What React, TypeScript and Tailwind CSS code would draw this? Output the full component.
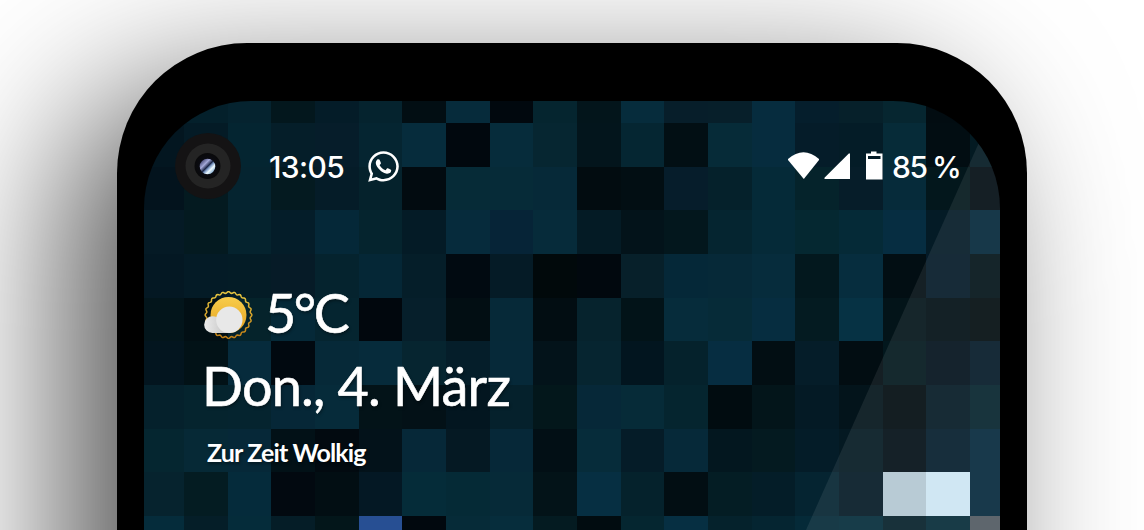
import { FaWhatsapp } from "react-icons/fa";

// wallpaper tiles, one row of hex values per line of the mosaic
const wallpaper = [
  "041a24 04202b 05232f 03171d 041c28 05232e 020e13 062b3b 01080e 05252f 03151b 062c3c 071e2a 071f2a 062c3e 051e2c 06202a 062630 020c11 010709",
  "031620 041b26 042531 051e29 061d2a 052531 062c3c 01080e 062c3b 062631 03151c 052632 020f14 062b38 062c3e 051c29 041c27 062b38 020d12 031a22",
  "03131d 041a20 052430 041a20 051c28 05222c 020b10 062b37 062b38 062938 020c10 020e13 061d2b 05212b 052a38 05232b 061d29 062b3a 03171c 020c13",
  "051a25 041a20 05232e 041d29 052838 05242e 041b26 062b3c 062437 062b3a 041b25 03131a 03171d 052530 052a38 052831 052a37 062d41 041b26 04283a",
  "041823 041b26 041c26 061b27 05232e 052736 051e29 010a11 051b26 01090b 01080e 07202a 052838 062938 062c3c 03181e 062d3e 020e13 041a28 021318",
  "03151b 020f14 05232b 052938 052530 01070d 061f2b 020e13 062938 020d12 06232d 021318 062c3b 062b38 062d40 041b21 063244 031419 010f14 020c10",
  "03151f 021217 062b3c 010910 062938 062b3b 062530 051e2a 062939 03131a 062530 02151f 05222c 062d41 020e13 051d29 020d12 02171d 02111c 041a28",
  "05212c 05242e 05242f 062737 062b3a 031318 031117 031620 05212c 03171b 062838 062b38 05252f 010c10 03151a 041a25 03141b 010b10 041a24 05232d",
  "052630 062936 062838 021117 020a10 03121a 062838 051923 062838 020f15 062c3a 051c28 062939 03171f 041a20 041c28 041922 020f16 041d2c 05293c",
  "06232e 041c22 052b3b 020910 020e13 041824 052c39 052a36 062a38 031318 062f42 05222c 020e13 041d24 041d28 052431 041a25 b2c7d2 cde5f2 05293c",
  "052c3b 051e28 052c3a 051d27 03161a 274f93 01080e 062b38 062d3c 041b21 010c10 052630 062f42 05222c 052531 052a38 042c3a 05202a 052b38 515961",
].flatMap((row) => row.split(" "));

function Wallpaper() {
  return (
    <div className="absolute inset-0">
      <div className="grid grid-cols-[40px_repeat(18,43.667px)_30px] grid-rows-[22px_repeat(9,43.667px)_14px]">
        {wallpaper.map((color, index) => (
          <div key={index} style={{ backgroundColor: `#${color}` }} />
        ))}
      </div>
      <svg
        className="absolute inset-0"
        width="856"
        height="429"
        viewBox="0 0 856 429"
      >
        <path d="M853.5 0H856V429H662Z" fill="#fff" fillOpacity="0.08" />
      </svg>
    </div>
  );
}

function Camera() {
  return (
    <svg className="size-[66px]" viewBox="0 0 66 66">
      <defs>
        <radialGradient id="lens" cx="0.5" cy="0.5" r="0.5">
          <stop offset="0" stopColor="#1b2238" />
          <stop offset="0.6" stopColor="#0a0b12" />
          <stop offset="1" stopColor="#09090a" />
        </radialGradient>
        <linearGradient id="glint" x1="0.1" y1="0.1" x2="0.9" y2="0.9">
          <stop offset="0" stopColor="#3a3c66" />
          <stop offset="0.3" stopColor="#a4a9d8" />
          <stop offset="0.5" stopColor="#1c2748" />
          <stop offset="0.6" stopColor="#7f9cc8" />
          <stop offset="0.75" stopColor="#eefaff" />
          <stop offset="1" stopColor="#6b9ac4" />
        </linearGradient>
      </defs>
      <circle cx="33" cy="33" r="33" fill="#141314" />
      <circle cx="33" cy="33" r="22.5" fill="#242424" />
      <circle cx="32.5" cy="33" r="13" fill="url(#lens)" />
      <circle cx="32.5" cy="33.5" r="7.8" fill="url(#glint)" />
    </svg>
  );
}

function WeatherIcon() {
  const points = Array.from({ length: 169 }, (_, i) => {
    const angle = (i / 168) * Math.PI * 2;
    const radius = 22.6 + Math.cos(angle * 24) * 0.8;
    return `${24.5 + Math.sin(angle) * radius},${24 - Math.cos(angle) * radius}`;
  }).join(" ");

  return (
    <svg className="mt-1 h-12 w-[49px]" viewBox="0 0 49 48">
      <defs>
        <linearGradient id="sun" x1="0" y1="0" x2="0" y2="1">
          <stop offset="0" stopColor="#f8cd4b" />
          <stop offset="1" stopColor="#e3a01f" />
        </linearGradient>
        <linearGradient id="ring" x1="0" y1="0" x2="0" y2="1">
          <stop offset="0" stopColor="#e9c943" />
          <stop offset="1" stopColor="#c07d14" />
        </linearGradient>
        <linearGradient id="cloud" x1="0" y1="0" x2="1" y2="0">
          <stop offset="0" stopColor="#ececec" />
          <stop offset="1" stopColor="#bdbdbd" />
        </linearGradient>
      </defs>
      <polygon points={points} fill="none" stroke="url(#ring)" strokeWidth="1.5" />
      <circle cx="24.5" cy="24" r="18" fill="url(#sun)" />
      <path
        d="M8.5 25.3A8.3 8.3 0 0 0 8.5 42H27V29L16 28C14 26.3 11.5 25.3 8.5 25.3Z"
        fill="url(#cloud)"
      />
      <circle cx="25.3" cy="28.8" r="13.2" fill="#e8e8e8" />
    </svg>
  );
}

function StatusIcons() {
  return (
    <svg className="h-[30px] w-24" viewBox="0 0 96 30" fill="#fff">
      <path d="M0 8Q15.5 -5.5 31 8V9L15.8 28L0 9Z" />
      <path d="M62 2.5V28H36.5V26.8L60.8 2.5Z" />
      <path
        fillRule="evenodd"
        d="M83 0.5H88.5V2.5H94.5V28.5H78V2.5H83ZM80 5V8H92.5V5Z"
      />
    </svg>
  );
}

function StatusBar() {
  return (
    <div className="flex h-[66px] items-center pl-[31px] pr-[41px] font-['Inter',sans-serif] text-[30px] leading-none font-medium text-white">
      <Camera />
      <span className="mt-0.5 ml-7 w-[76px] tracking-[-0.6px] whitespace-nowrap">13:05</span>
      <FaWhatsapp className="ml-[21px] size-[35px]" />
      <div className="ml-auto flex items-center">
        <StatusIcons />
        <span className="mt-0.5 ml-2 w-[67px] tracking-[-1.5px] whitespace-nowrap [word-spacing:-1px]">
          85 %
        </span>
      </div>
    </div>
  );
}

function WeatherWidget() {
  return (
    <div className="mt-[84px] ml-[60px] flex flex-col items-start font-['Lato',sans-serif] whitespace-nowrap text-white [text-shadow:1px_2px_3px_rgba(0,0,0,0.4)]">
      <div className="flex h-[60px] items-center">
        <WeatherIcon />
        <span className="ml-[12px] text-[54px] leading-[60px] tracking-[-2.5px] [-webkit-text-stroke:0.6px_white]">
          5°C
        </span>
      </div>
      <div className="mt-[13px] -ml-[2px] text-[54px] leading-[60px] tracking-[-0.8px] [-webkit-text-stroke:0.6px_white]">
        Don., 4. März
      </div>
      <div className="mt-[21px] ml-[3px] text-[25px] leading-[30px] font-bold tracking-[-0.85px]">
        Zur Zeit Wolkig
      </div>
    </div>
  );
}

export default function App() {
  return (
    <main className="h-[530px] w-full overflow-hidden bg-white px-[117px] pt-[43px]">
      <div className="h-[1200px] rounded-t-[130px] bg-black px-[27px] pt-[58px] shadow-[-53px_48px_156px_0px_rgba(0,0,0,0.665)]">
        <div className="relative h-[429px] w-[856px] overflow-hidden rounded-t-[107px]">
          <Wallpaper />
          <div className="relative pt-8">
            <StatusBar />
            <WeatherWidget />
          </div>
        </div>
      </div>
    </main>
  );
}
